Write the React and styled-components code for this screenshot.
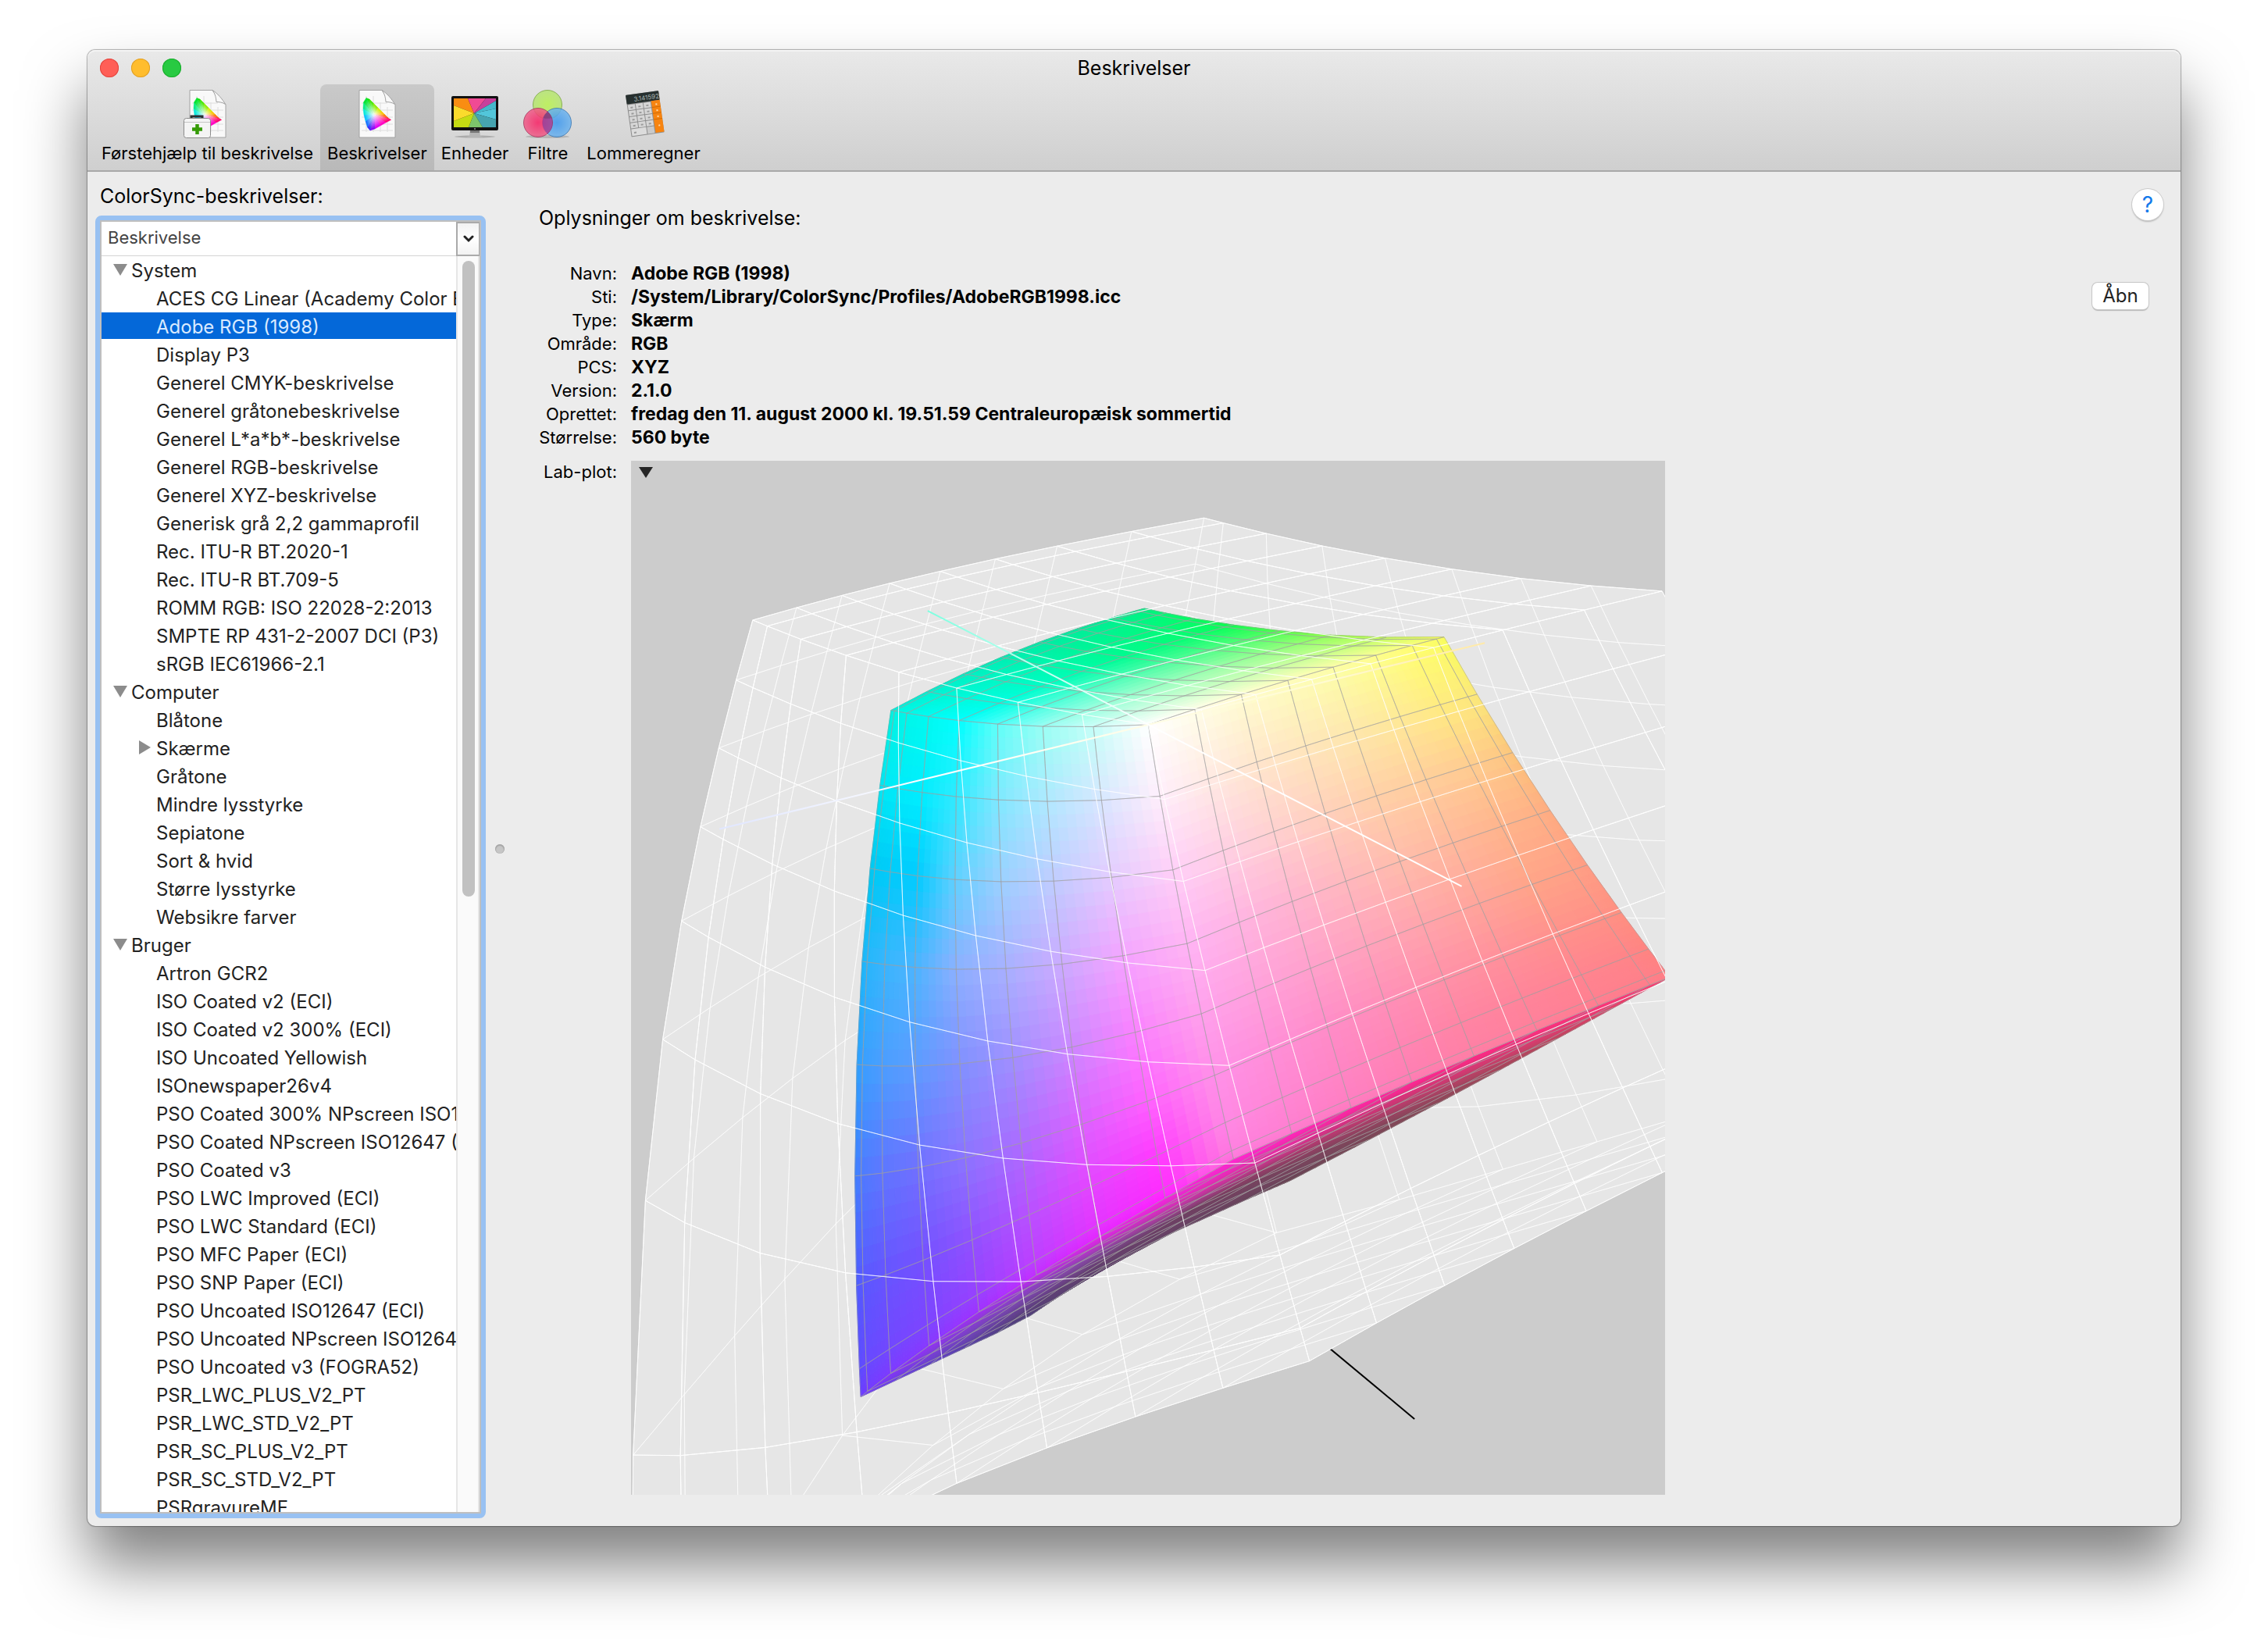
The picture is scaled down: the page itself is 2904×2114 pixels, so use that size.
import React, { useState } from "react";
import styled, { createGlobalStyle } from "styled-components";

const GlobalStyle = createGlobalStyle`
  * {
    box-sizing: border-box;
  }
  body {
    margin: 0;
    background: #fff;
    color: #000;
    font-family: Inter, "Liberation Sans", sans-serif;
  }
  button {
    font: inherit;
    color: inherit;
    border: 0;
    padding: 0;
    background: none;
  }
`;

const Desktop = styled.div`
  padding: 64px 112px 160px;
  overflow: hidden;
`;
const Window = styled.main`
  border-radius: 10px;
  background: #ececec;
  box-shadow: 0 0 1px 1px rgba(0, 0, 0, 0.3), 0 50px 80px rgba(0, 0, 0, 0.5);
`;
const Header = styled.header`
  border-radius: 10px 10px 0 0;
  border-bottom: 2px solid #a9a9a9;
  background: linear-gradient(#e9e9e9, #cfcfcf);
  box-shadow: inset 0 2px 0 #f4f4f4;
`;
const TitleBar = styled.div`
  display: grid;
  grid-template-columns: 1fr auto 1fr;
  align-items: center;
  height: 44px;
  padding: 2px 16px 0;
`;
const Lights = styled.div`
  display: flex;
  gap: 16px;
`;
const Light = styled.button`
  width: 24px;
  height: 24px;
  border-radius: 50%;
  background: ${props => props.$color};
  box-shadow: inset 0 0 0 1px ${props => props.$edge};
`;
const Title = styled.h1`
  margin: 0;
  font-size: 25px;
  line-height: 30px;
  font-weight: 400;
`;
const Toolbar = styled.nav`
  display: flex;
  height: 110px;
  padding-left: 9px;
`;
const Tool = styled.button`
  display: flex;
  flex-direction: column;
  align-items: center;
  gap: 5px;
  padding: 5px 9px 0;
  font-size: 22px;
  line-height: 28px;
  white-space: nowrap;
  border-radius: 8px 8px 0 0;
  background: ${props => (props.$active ? "linear-gradient(#c9c9c9, #b9b9b9)" : "none")};
  svg {
    width: 64px;
    height: 64px;
  }
`;

const Body = styled.div`
  display: grid;
  grid-template-columns: 510px 36px minmax(0, 1fr);
`;
const Sidebar = styled.section`
  display: flex;
  flex-direction: column;
  padding: 16px 0 10px 10px;
`;
const Heading = styled.h2`
  margin: 0;
  font-size: 25px;
  line-height: 30px;
  font-weight: 400;
`;
const SidebarHeading = styled(Heading)`
  padding: 0 6px 10px;
`;
const ListFrame = styled.div`
  flex: 1;
  display: flex;
  border: 6px solid #98c1f2;
  border-radius: 8px;
`;
const List = styled.div`
  flex: 1;
  display: grid;
  grid-template: 44px minmax(0, 1fr) / minmax(0, 1fr) 30px;
  contain: size;
  overflow: hidden;
  border: 2px solid #bfbfbf;
  background: #fff;
`;
const ColumnTitle = styled.div`
  padding: 5px 8px 0;
  border-bottom: 1px solid #d4d4d4;
  color: #444;
  font-size: 22px;
  line-height: 30px;
`;
const SortButton = styled.button`
  display: flex;
  align-items: center;
  justify-content: center;
  border: 2px solid #aaa;
  border-right-width: 1px;
  background: linear-gradient(#f2f2f2, #fff 50%, #f2f2f2);
`;
const Tree = styled.ul`
  margin: 0;
  padding: 0;
  overflow: hidden;
  list-style: none;
`;
const Row = styled.li`
  display: flex;
  height: 34px;
  margin-bottom: 2px;
  padding-left: ${props => [15, 48, 70][props.$indent]}px;
  font-size: 24px;
  line-height: 38px;
  white-space: nowrap;
  color: ${props => (props.$selected ? "#d9eaff" : "#222")};
  background: ${props => (props.$selected ? "#0468d9" : "none")};
  cursor: default;
`;
const Disclosure = styled.button`
  flex: none;
  width: ${props => (props.$nested ? 22 : 23)}px;
  line-height: 0;
  text-align: left;
`;
const Track = styled.div`
  padding: 6px;
  border-left: 2px solid #e6e6e6;
  border-right: 2px solid #e6e6e6;
  background: #fafafa;
`;
const Thumb = styled.div`
  width: 16px;
  height: 51%;
  margin: 0 auto;
  border-radius: 8px;
  background: #c1c1c1;
`;
const Splitter = styled.div`
  display: flex;
  align-items: center;
  justify-content: center;
`;
const Knob = styled.span`
  width: 12px;
  height: 12px;
  border-radius: 50%;
  background: #c6c6c6;
  box-shadow: inset 0 1px 1px 1px #a6a6a6;
`;

const Content = styled.section`
  padding: 22px 22px 40px 32px;
`;
const ContentTop = styled.div`
  display: flex;
  justify-content: space-between;
  margin-bottom: 41px;
`;
const InfoHeading = styled(Heading)`
  padding-top: 22px;
`;
const HelpButton = styled.button`
  width: 40px;
  height: 40px;
  border-radius: 50%;
  background: #fff;
  color: #1479ea;
  font-size: 28px;
  line-height: 40px;
  box-shadow: 0 0 0 1px #cbcbcb, 0 2px 2px #b4b4b4;
`;
const Details = styled.div`
  display: flex;
  justify-content: space-between;
  align-items: flex-start;
  margin-bottom: 15px;
  padding-right: 19px;
`;
const Facts = styled.dl`
  display: grid;
  grid-template-columns: 100px minmax(0, 1fr);
  column-gap: 18px;
  margin: 0;
  font-size: 22px;
  line-height: 30px;
`;
const Term = styled.dt`
  text-align: right;
  white-space: nowrap;
`;
const Value = styled.dd`
  margin: 0;
  font-size: 23px;
  font-weight: 700;
`;
const OpenButton = styled.button`
  width: 72px;
  height: 34px;
  margin-top: 27px;
  border-radius: 7px;
  background: #fff;
  color: #222;
  font-size: 24px;
  line-height: 34px;
  box-shadow: 0 0 0 1px #c6c6c6, 0 2px 1px #b8b8b8;
`;
const PlotRow = styled.div`
  display: grid;
  grid-template-columns: 100px minmax(0, 1324px);
  column-gap: 18px;
  font-size: 22px;
  line-height: 28px;
`;
const PlotLabel = styled.div`
  text-align: right;
  white-space: nowrap;
`;
const PlotArea = styled.div`
  position: relative;
  background: #ccc;
  > svg {
    display: block;
    width: 100%;
    height: auto;
  }
`;
const PlotMenu = styled.button`
  position: absolute;
  top: 8px;
  left: 10px;
  line-height: 0;
`;

/* ---- colour maths for the Lab plot ---- */

const adobeRgb = {
  gamma: 2.2,
  matrix: [
    [0.6097559, 0.2052401, 0.149224],
    [0.3111242, 0.625656, 0.0632197],
    [0.0194811, 0.0608902, 0.7448387]
  ]
};
const rommRgb = {
  gamma: 1.8,
  matrix: [
    [0.7976749, 0.1351917, 0.0313534],
    [0.2880402, 0.7118741, 0.0000857],
    [0, 0, 0.82521]
  ]
};
const D50 = [0.9642, 1, 0.8251];

// L, a and b are all divided by 100
const toLab = (space, rgb) => {
  const linear = rgb.map(v => Math.pow(v, space.gamma));
  const f = space.matrix
    .map((row, i) => (row[0] * linear[0] + row[1] * linear[1] + row[2] * linear[2]) / D50[i])
    .map(t => (t > 216 / 24389 ? Math.cbrt(t) : ((24389 / 27) * t + 16) / 116));
  return [(116 * f[1] - 16) / 100, 5 * (f[0] - f[1]), 2 * (f[1] - f[2])];
};

// perspective camera
const camera = [
  [-0.08401, 0.1855, 0.48174, 0.6622],
  [-0.64812, 0.09633, -0.06545, 0.94305],
  [-0.12719, -0.14831, 0.10355, 1]
];
const project = ([l, a, b]) => {
  const [x, y, w] = camera.map(m => m[0] * l + m[1] * a + m[2] * b + m[3]);
  return [(1000 * x) / w, (1000 * y) / w, w];
};

const STEPS = 8;

const buildQuads = space => {
  const quads = [];
  for (let axis = 0; axis < 3; axis++) {
    for (let side = 0; side < 2; side++) {
      const at = (i, j) => {
        const rgb = [0, 0, 0];
        rgb[axis] = side;
        rgb[(axis + 1) % 3] = i / STEPS;
        rgb[(axis + 2) % 3] = j / STEPS;
        return { rgb, p: project(toLab(space, rgb)) };
      };
      for (let i = 0; i < STEPS; i++) {
        for (let j = 0; j < STEPS; j++) {
          const c = [at(i, j), at(i + 1, j), at(i + 1, j + 1), at(i, j + 1)];
          const d1 = [c[2].p[0] - c[0].p[0], c[2].p[1] - c[0].p[1]];
          const d2 = [c[3].p[0] - c[1].p[0], c[3].p[1] - c[1].p[1]];
          const cross = d1[0] * d2[1] - d1[1] * d2[0];
          quads.push({
            axis,
            side,
            corners: c,
            front: side ? cross < 0 : cross > 0,
            depth: (c[0].p[2] + c[1].p[2] + c[2].p[2] + c[3].p[2]) / 4
          });
        }
      }
    }
  }
  return quads.sort((a, b) => b.depth - a.depth);
};

const quadPath = points => "M" + points.map(p => p[0].toFixed(1) + " " + p[1].toFixed(1)).join("L") + "Z";

// surface colours, row and col name the channels (0 = r, 1 = g, 2 = b)
const surfaces = {
  "2-1": {
    row: 1,
    col: 0,
    rows: [8, 7, 6, 5, 4, 3, 2, 0],
    cols: [0, 3, 4, 5, 6, 7, 8],
    colors: [
      "00f0dc 00faf0 00ffff 60fff8 98fff4 c4fff8 ffffff",
      "00e6f0 00eeff 30eaff 80e8ff b0e8ff d8e6ff ffeefb",
      "00c8f0 00ccff 60d0ff 9cd0ff c0ccff e4ccff ffd0f8",
      "14b8fa 4cb4ff 8cb0ff a8b0ff ccaaff f4a4ff ffb4f4",
      "28a0ff 5c9cff 8090ff a090ff cc88ff fa80ff ffa0ec",
      "3c80ff 7070ff 8c74ff ac6cff dc60ff ff60ff ff90e8",
      "4c5cff 7450ff 9050ff b850ff e444ff ff38ff ff88e4",
      "6a3cff 8838ff a030ff c42cff e424ff ff20ff ff70d8"
    ]
  },
  "0-1": {
    row: 1,
    col: 2,
    rows: [8, 7, 6, 5, 4, 3, 2, 0],
    cols: [8, 6, 4, 2, 0],
    colors: [
      "ffffff fffcd0 fdffa8 ffff70 f8ff58",
      "ffeefb ffe6cc fee8ac ffec80 fbe878",
      "ffd0f8 ffd0d0 ffd0a8 ffcc90 fcc478",
      "ffb4f4 ffb4d0 ffbcac ffb48c ffac80",
      "ffa0ec ffa0cc ffa4ac ffa488 ff9c84",
      "ff90e8 ff8cc8 ff90a8 ff908c ff9080",
      "ff88e4 ff84c4 ff84a4 ff8490 ff8480",
      "ff78dc ff78c0 ff7ca6 ff7c90 ff7c88"
    ]
  },
  "1-1": {
    row: 2,
    col: 0,
    rows: [8, 4, 0],
    cols: [0, 2, 4, 6, 8],
    colors: [
      "00f0dc 00f8e8 00ffff 98fff4 ffffff",
      "00e8a8 00f0a0 00fc90 98ffa8 fdffa8",
      "00ec88 00fa70 10ff48 90ff40 f8ff58"
    ]
  },
  "1-0": {
    row: 2,
    col: 0,
    rows: [8, 6, 4, 0],
    cols: [0, 4, 6, 8],
    colors: [
      "6a3cff a030f0 e028e8 ff28d0",
      "5c40c8 8848a8 d830a8 ff28a8",
      "504088 704060 c03874 ff2888",
      "46404a 8a4a58 b8485c ff4070"
    ]
  }
};

const parsed = {};
Object.keys(surfaces).forEach(key => {
  parsed[key] = surfaces[key].colors.map(line =>
    line.split(" ").map(hex => [0, 2, 4].map(i => parseInt(hex.slice(i, i + 2), 16)))
  );
});

const locate = (knots, value) => {
  let i = 0;
  while (i < knots.length - 2 && (value - knots[i + 1]) * (knots[1] - knots[0]) > 0) i++;
  return [i, (value - knots[i]) / (knots[i + 1] - knots[i])];
};
const mix = (a, b, t) => a.map((v, i) => v + (b[i] - v) * t);

const surfaceColor = (key, rgb) => {
  const s = surfaces[key];
  if (!s) return "rgb(70,60,80)";
  const [i, t] = locate(s.rows, rgb[s.row] * STEPS);
  const [j, u] = locate(s.cols, rgb[s.col] * STEPS);
  const c = parsed[key];
  const out = mix(mix(c[i][j], c[i][j + 1], u), mix(c[i + 1][j], c[i + 1][j + 1], u), t);
  return `rgb(${out.map(Math.round).join(",")})`;
};

const PARTS = 6;
const buildCells = quads => {
  const cells = [];
  quads.filter(q => q.front).forEach(q => {
    const at = (key, u, v) =>
      mix(mix(q.corners[0][key], q.corners[1][key], u), mix(q.corners[3][key], q.corners[2][key], u), v);
    for (let i = 0; i < PARTS; i++) {
      for (let j = 0; j < PARTS; j++) {
        const [u0, u1, v0, v1] = [i, i + 1, j, j + 1].map(n => n / PARTS);
        cells.push({
          d: quadPath([at("p", u0, v0), at("p", u1, v0), at("p", u1, v1), at("p", u0, v1)]),
          color: surfaceColor(`${q.axis}-${q.side}`, at("rgb", (u0 + u1) / 2, (v0 + v1) / 2))
        });
      }
    }
  });
  return cells;
};

const inner = buildQuads(adobeRgb);
const outer = buildQuads(rommRgb);
const cells = buildCells(inner);
const wires = quads => quads.map(q => quadPath(q.corners.map(c => c.p))).join("");
const shellPath = wires(outer);
const shellFrontPath = wires(outer.filter(q => q.front));
const bodyPath = wires(inner.filter(q => q.front));

const AXIS = 1.02;
const Axis = ({ from, to, ...rest }) => {
  const [p, q] = [project(from), project(to)];
  return <line x1={p[0]} y1={p[1]} x2={q[0]} y2={q[1]} {...rest} />;
};

const LabPlot = () => (
  <svg viewBox="0 0 1324 1324" role="img" aria-label="Lab-plot">
    <defs>
      <linearGradient id="axis-a" gradientUnits="userSpaceOnUse" x1="380" y1="0" x2="663" y2="0">
        <stop offset="0" stopColor="#7dffe0" />
        <stop offset="1" stopColor="#fff" />
      </linearGradient>
      <linearGradient id="axis-b" gradientUnits="userSpaceOnUse" x1="110" y1="0" x2="1095" y2="0">
        <stop offset="0" stopColor="#e0e6ff" />
        <stop offset="0.3" stopColor="#fff" />
        <stop offset="0.8" stopColor="#fffbd0" />
        <stop offset="1" stopColor="#ffe9a8" />
      </linearGradient>
    </defs>
    <Axis from={[0, -AXIS, 0]} to={[0, AXIS, 0]} stroke="#000" strokeWidth="2" />
    {outer.map((q, i) => (
      <path key={i} d={quadPath(q.corners.map(c => c.p))} fill="#e6e6e6" />
    ))}
    <path d={shellPath} fill="none" stroke="#fff" strokeOpacity="0.6" />
    <g strokeWidth="1">
      {cells.map((cell, i) => (
        <path key={i} d={cell.d} fill={cell.color} stroke={cell.color} />
      ))}
    </g>
    <path d={bodyPath} fill="none" stroke="#a0a0a0" strokeOpacity="0.5" />
    <path d={shellFrontPath} fill="none" stroke="#fff" strokeOpacity="0.6" />
    <Axis from={[1, 0, -AXIS]} to={[1, 0, AXIS]} stroke="url(#axis-b)" strokeWidth="2" />
    <Axis from={[1, -AXIS, 0]} to={[1, AXIS, 0]} stroke="url(#axis-a)" strokeWidth="2" />
  </svg>
);

/* ---- toolbar icons ---- */

const rim = [
  [18, 12.5, "00e010"],
  [22, 14, "20e800"],
  [27, 19, "60e800"],
  [33, 25, "b8ee00"],
  [38, 30, "f0e400"],
  [42, 34, "ff9c00"],
  [46, 38, "ff4010"],
  [49.5, 40.5, "ff0048"],
  [43, 44, "ff00a0"],
  [36, 48, "ff00e0"],
  [29, 52, "c000ff"],
  [23, 54, "4a10f0"],
  [19.5, 50, "2040ff"],
  [17, 42, "00a0ff"],
  [15, 34, "00e0ff"],
  [14, 26, "00f0b0"],
  [14.5, 18, "00e850"]
].map(([x, y, hex]) => [x, y, ...[0, 2, 4].map(i => parseInt(hex.slice(i, i + 2), 16))]);
const hub = [28, 34, 255, 255, 255];
const RINGS = 8;
const fan = [];
for (let ring = RINGS; ring > 0; ring--) {
  rim.forEach((point, i) => {
    const next = rim[(i + 1) % rim.length];
    const a = mix(hub, point, ring / RINGS);
    const b = mix(hub, next, ring / RINGS);
    fan.push({ d: quadPath([hub, a, b]), color: `rgb(${mix(a, b, 0.5).slice(2).map(Math.round).join(",")})` });
  });
}

const ProfileIcon = ({ kit }) => (
  <svg viewBox="0 0 64 64" aria-hidden="true">
    <path d="M9 2.5h29c3 4 5 8 6.5 13 4 1 7 2 10.500 5V63H9z" fill="#f9f9f9" stroke="#a2a2a2" />
    <path d="M18 10v46M27 10v46M36 18v38M45 24v32M12 19h33M12 28h40M12 37h40M12 46h40M12 54h40" stroke="#dedede" fill="none" />
    {fan.map(({ d, color }, i) => (
      <path key={i} d={d} fill={color} stroke={color} strokeWidth="0.5" />
    ))}
    <path d="M38 2.500c3 4 4.500 8 5 15 4 0 8 .5 11.500 3C51 14 44 6 38 2.500z" fill="#f8f8f8" stroke="#a2a2a2" />
    {kit && (
      <g>
        <path d="M11 38v-2h14v2" fill="none" stroke="#2c3030" strokeWidth="3" />
        <rect x="1.500" y="38.500" width="34" height="25" rx="3" fill="#f4f4f4" stroke="#8c8c8c" />
        <path d="M2 43.500h33" stroke="#c4c4c4" />
        <path d="M18.500 46v13M12 52.500h13" stroke="#359b06" strokeWidth="4.500" />
      </g>
    )}
  </svg>
);

const wedges = [
  ["M5 13h18l8 19L5 22z", "#f98d12"],
  ["M23 13h23L31 32z", "#f04a94"],
  ["M46 13h13v3L31 32z", "#c8409c"],
  ["M59 16v10l-28 6z", "#45b8cc"],
  ["M59 26v14l-28-8z", "#52c6da"],
  ["M59 40v10H42L31 32z", "#46a4b0"],
  ["M42 50H24l7-18z", "#7cc46a"],
  ["M24 50H5v-8l26-10z", "#c5dc12"],
  ["M5 42V22l26 10z", "#fbdb2c"]
];
const DevicesIcon = () => (
  <svg viewBox="0 0 64 64" aria-hidden="true">
    <ellipse cx="32" cy="62" rx="26" ry="1.500" fill="#000" opacity="0.2" />
    <path d="M26 53h12l1 8 4 2H21l4-2z" fill="#b5b5b5" />
    <path d="M26 54h12v3H26z" fill="#777" />
    <rect x="2" y="10" width="60" height="44" rx="2" fill="#111" />
    {wedges.map(([d, fill]) => (
      <path key={d} d={d} fill={fill} />
    ))}
    <circle cx="32" cy="52" r="1" fill="#999" />
  </svg>
);

const FiltersIcon = () => (
  <svg viewBox="0 0 64 64" aria-hidden="true">
    <defs>
      <radialGradient id="lens-green">
        <stop offset="0" stopColor="#b9f24e" />
        <stop offset="1" stopColor="#b5e374" />
      </radialGradient>
      <radialGradient id="lens-blue">
        <stop offset="0" stopColor="#3b96ee" />
        <stop offset="1" stopColor="#6db3ee" />
      </radialGradient>
      <radialGradient id="lens-red">
        <stop offset="0" stopColor="#f81d62" />
        <stop offset="1" stopColor="#ee5d88" />
      </radialGradient>
    </defs>
    <ellipse cx="32" cy="62" rx="28" ry="2" fill="#000" opacity="0.15" />
    <g strokeOpacity="0.7" fillOpacity="0.85">
      <circle cx="32" cy="21" r="18.500" fill="url(#lens-green)" stroke="#6d9c2c" />
      <circle cx="44" cy="44" r="18.500" fill="url(#lens-blue)" stroke="#2a6aa8" />
      <circle cx="20" cy="44" r="18.500" fill="url(#lens-red)" stroke="#9c2450" />
    </g>
    <path d="M32 30a18.500 18.500 0 0 1 0 28 18.500 18.500 0 0 1 0-28z" fill="#7a3fa4" fillOpacity="0.6" />
    <path d="M32 30a18.500 18.500 0 0 1 5.500 8 18.500 18.500 0 0 1-11 0 18.500 18.500 0 0 1 5.500-8z" fill="#4b3040" fillOpacity="0.3" />
  </svg>
);

const CalculatorIcon = () => (
  <svg viewBox="0 0 64 64" aria-hidden="true">
    <g transform="matrix(1 -0.140 0.139 0.970 9 9)">
      <rect width="42" height="55" rx="1" fill="#8e8e8e" />
      <rect width="42" height="12" rx="1" fill="#27302f" />
      {[0, 1, 2].map(col =>
        [0, 1, 2, 3].map(row => (
          <rect key={col + "-" + row} x={1 + col * 10} y={13 + row * 8} width="9" height="7" fill="#d6d6d6" />
        ))
      )}
      <rect x="1" y="45" width="19" height="9" fill="#dcdcdc" />
      <rect x="21" y="45" width="9" height="9" fill="#cacaca" />
      <rect x="31" y="12" width="11" height="42" fill="#f78410" />
      <path d="M31 20.500h11M31 28.500h11M31 36.500h11" stroke="#d06c08" strokeWidth="1" />
      <path
        d="M4 17h3M14 17h3M24 17h3M4 25h3M14 25h3M24 25h3M4 33h3M14 33h3M24 33h3M4 41h3M14 41h3M24 41h3M4 50h3"
        stroke="#9a9a9a"
        strokeWidth="2"
      />
      <path d="M36 17h2M36 25h2M36 33h2M36 45h2" stroke="#ffd9a8" strokeWidth="2" />
    </g>
    <text x="20" y="17" fontSize="8" fill="#a9b6b4" transform="rotate(-8 20 17)">
      3.141592
    </text>
  </svg>
);

const Triangle = ({ open, color = "#8c8c8c" }) =>
  open ? (
    <svg width="18" height="34" viewBox="0 0 18 34" aria-hidden="true">
      <path d="M0 10h18L9 25z" fill={color} />
    </svg>
  ) : (
    <svg width="16" height="34" viewBox="0 0 16 34" aria-hidden="true">
      <path d="M0 8v18l15-9z" fill={color} />
    </svg>
  );

/* ---- data ---- */

const tools = [
  { name: "Førstehjælp til beskrivelse", icon: <ProfileIcon kit /> },
  { name: "Beskrivelser", icon: <ProfileIcon /> },
  { name: "Enheder", icon: <DevicesIcon /> },
  { name: "Filtre", icon: <FiltersIcon /> },
  { name: "Lommeregner", icon: <CalculatorIcon /> }
];

const groups = [
  {
    name: "System",
    items: [
      "ACES CG Linear (Academy Color Encoding System AP1)",
      "Adobe RGB (1998)",
      "Display P3",
      "Generel CMYK-beskrivelse",
      "Generel gråtonebeskrivelse",
      "Generel L*a*b*-beskrivelse",
      "Generel RGB-beskrivelse",
      "Generel XYZ-beskrivelse",
      "Generisk grå 2,2 gammaprofil",
      "Rec. ITU-R BT.2020-1",
      "Rec. ITU-R BT.709-5",
      "ROMM RGB: ISO 22028-2:2013",
      "SMPTE RP 431-2-2007 DCI (P3)",
      "sRGB IEC61966-2.1"
    ]
  },
  {
    name: "Computer",
    items: [
      "Blåtone",
      "Skærme",
      "Gråtone",
      "Mindre lysstyrke",
      "Sepiatone",
      "Sort & hvid",
      "Større lysstyrke",
      "Websikre farver"
    ]
  },
  {
    name: "Bruger",
    items: [
      "Artron GCR2",
      "ISO Coated v2 (ECI)",
      "ISO Coated v2 300% (ECI)",
      "ISO Uncoated Yellowish",
      "ISOnewspaper26v4",
      "PSO Coated 300% NPscreen ISO12647 (ECI)",
      "PSO Coated NPscreen ISO12647 (ECI)",
      "PSO Coated v3",
      "PSO LWC Improved (ECI)",
      "PSO LWC Standard (ECI)",
      "PSO MFC Paper (ECI)",
      "PSO SNP Paper (ECI)",
      "PSO Uncoated ISO12647 (ECI)",
      "PSO Uncoated NPscreen ISO12647 (ECI)",
      "PSO Uncoated v3 (FOGRA52)",
      "PSR_LWC_PLUS_V2_PT",
      "PSR_LWC_STD_V2_PT",
      "PSR_SC_PLUS_V2_PT",
      "PSR_SC_STD_V2_PT",
      "PSRgravureMF"
    ]
  }
];

const facts = [
  ["Navn:", "Adobe RGB (1998)"],
  ["Sti:", "/System/Library/ColorSync/Profiles/AdobeRGB1998.icc"],
  ["Type:", "Skærm"],
  ["Område:", "RGB"],
  ["PCS:", "XYZ"],
  ["Version:", "2.1.0"],
  ["Oprettet:", "fredag den 11. august 2000 kl. 19.51.59 Centraleuropæisk sommertid"],
  ["Størrelse:", "560 byte"]
];

const ProfileTree = () => {
  const [selected, setSelected] = useState("Adobe RGB (1998)");
  const [closed, setClosed] = useState([]);

  const toggle = name =>
    setClosed(closed.includes(name) ? closed.filter(n => n !== name) : [...closed, name]);

  return (
    <Tree role="tree" aria-label="ColorSync-beskrivelser">
      {groups.map(group => (
        <React.Fragment key={group.name}>
          <Row $indent={0} role="treeitem" aria-expanded={!closed.includes(group.name)}>
            <Disclosure aria-label={group.name} onClick={() => toggle(group.name)}>
              <Triangle open={!closed.includes(group.name)} />
            </Disclosure>
            {group.name}
          </Row>
          {!closed.includes(group.name) &&
            group.items.map(item => (
              <Row
                key={item}
                role="treeitem"
                $indent={item === "Skærme" ? 1 : 2}
                $selected={item === selected}
                aria-selected={item === selected}
                onClick={() => setSelected(item)}
              >
                {item === "Skærme" && (
                  <Disclosure $nested aria-label={item}>
                    <Triangle />
                  </Disclosure>
                )}
                {item}
              </Row>
            ))}
        </React.Fragment>
      ))}
    </Tree>
  );
};

const App = () => {
  const [tool, setTool] = useState("Beskrivelser");

  return (
    <Desktop>
      <GlobalStyle />
      <Window>
        <Header>
          <TitleBar>
            <Lights>
              <Light $color="#ff5f57" $edge="#e2463f" aria-label="Luk" />
              <Light $color="#ffbd2e" $edge="#e0a028" aria-label="Minimer" />
              <Light $color="#28ca42" $edge="#1aab2c" aria-label="Zoom" />
            </Lights>
            <Title>Beskrivelser</Title>
          </TitleBar>
          <Toolbar>
            {tools.map(({ name, icon }) => (
              <Tool key={name} $active={name === tool} onClick={() => setTool(name)}>
                {icon}
                {name}
              </Tool>
            ))}
          </Toolbar>
        </Header>
        <Body>
          <Sidebar>
            <SidebarHeading>ColorSync-beskrivelser:</SidebarHeading>
            <ListFrame>
              <List>
                <ColumnTitle>Beskrivelse</ColumnTitle>
                <SortButton aria-label="Vis">
                  <svg width="14" height="10" viewBox="0 0 14 10" aria-hidden="true">
                    <path d="M2 2l5 5 5-5" fill="none" stroke="#222" strokeWidth="3" strokeLinecap="round" />
                  </svg>
                </SortButton>
                <ProfileTree />
                <Track>
                  <Thumb />
                </Track>
              </List>
            </ListFrame>
          </Sidebar>
          <Splitter>
            <Knob />
          </Splitter>
          <Content>
            <ContentTop>
              <InfoHeading>Oplysninger om beskrivelse:</InfoHeading>
              <HelpButton>?</HelpButton>
            </ContentTop>
            <Details>
              <Facts>
                {facts.map(([term, value]) => (
                  <React.Fragment key={term}>
                    <Term>{term}</Term>
                    <Value>{value}</Value>
                  </React.Fragment>
                ))}
              </Facts>
              <OpenButton>Åbn</OpenButton>
            </Details>
            <PlotRow>
              <PlotLabel>Lab-plot:</PlotLabel>
              <PlotArea>
                <LabPlot />
                <PlotMenu aria-label="Plotvisning">
                  <svg width="18" height="14" viewBox="0 0 18 14" aria-hidden="true">
                    <path d="M0 0h18L9 14z" fill="#262626" />
                  </svg>
                </PlotMenu>
              </PlotArea>
            </PlotRow>
          </Content>
        </Body>
      </Window>
    </Desktop>
  );
};

export default App;
